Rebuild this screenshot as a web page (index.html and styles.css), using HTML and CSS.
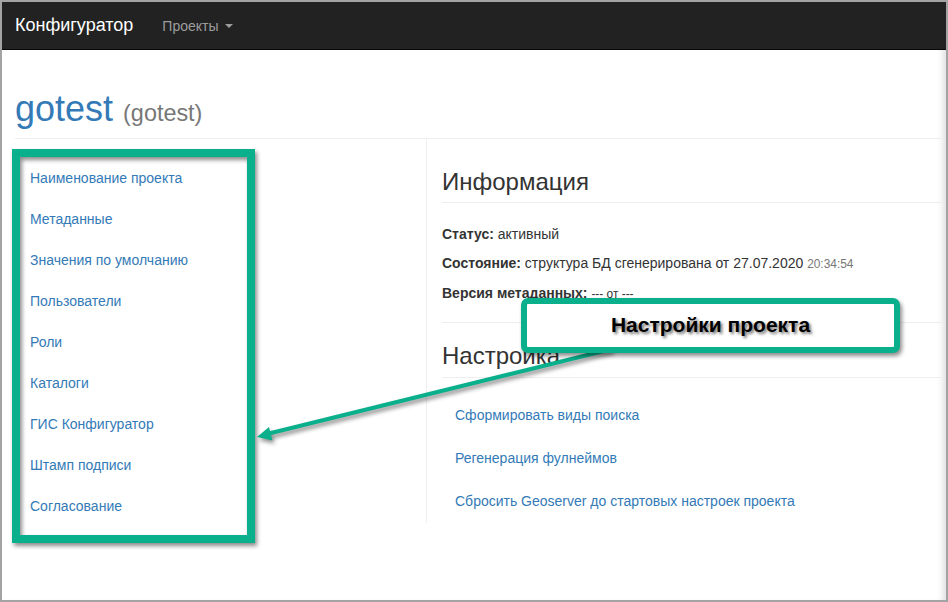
FILE: index.html
```html
<!DOCTYPE html>
<html lang="ru">
<head>
<meta charset="utf-8">
<title>Конфигуратор</title>
<link rel="stylesheet" href="styles.css">
</head>
<body>
<div class="frame">
  <nav class="navbar">
    <span class="brand">Конфигуратор</span>
    <span class="dropdown">Проекты <span class="caret"></span></span>
  </nav>
  <div class="container">
    <div class="page-header">
      <h1>gotest <small>(gotest)</small></h1>
    </div>
    <div class="row">
      <div class="col-left">
        <ul class="nav-stacked">
          <li><a>Наименование проекта</a></li>
          <li><a>Метаданные</a></li>
          <li><a>Значения по умолчанию</a></li>
          <li><a>Пользователи</a></li>
          <li><a>Роли</a></li>
          <li><a>Каталоги</a></li>
          <li><a>ГИС Конфигуратор</a></li>
          <li><a>Штамп подписи</a></li>
          <li><a>Согласование</a></li>
        </ul>
      </div>
      <div class="col-right">
        <h2 class="section-title">Информация</h2>
        <div class="info">
          <p><b>Статус:</b> активный</p>
          <p><b>Состояние:</b> структура БД сгенерирована от 27.07.2020 <small>20:34:54</small></p>
          <p><b>Версия метаданных:</b> <span class="muted">--- от ---</span></p>
        </div>
        <div class="settings">
          <h2 class="section-title">Настройка</h2>
          <ul class="action-list">
            <li><a>Сформировать виды поиска</a></li>
            <li><a>Регенерация фулнеймов</a></li>
            <li><a>Сбросить Geoserver до стартовых настроек проекта</a></li>
          </ul>
        </div>
      </div>
    </div>
  </div>

  <svg class="overlay" width="948" height="602" viewBox="0 0 948 602">
    <rect class="anno" x="16" y="153" width="235" height="386" fill="none" stroke="#0aaf8b" stroke-width="8"/>
    <g class="anno">
      <line x1="612" y1="349" x2="269" y2="433.5" stroke="#0aaf8b" stroke-width="4"/>
      <polygon points="257,437 272.5,440.5 269,427" fill="#0aaf8b"/>
    </g>
  </svg>
  <div class="callout">Настройки проекта</div>
</div>
</body>
</html>
```

FILE: styles.css
```css
* { box-sizing: border-box; }

html, body {
  margin: 0;
  padding: 0;
  background: #ffffff;
}

body {
  font-family: "Liberation Sans", Arial, sans-serif;
  font-size: 14px;
  line-height: 20px;
  color: #333333;
}

.frame {
  position: relative;
  width: 948px;
  height: 602px;
  border: 2px solid #a3a3a3;
  overflow: hidden;
  background: #ffffff;
  box-shadow: inset -7px 0 6px -4px rgba(0, 0, 0, 0.13);
}

/* Navbar */
.navbar {
  height: 48px;
  background: #222222;
  border-bottom: 1px solid #080808;
  display: flex;
  align-items: center;
  padding-left: 13px;
}

.brand {
  color: #ffffff;
  font-size: 18px;
  line-height: 20px;
  margin-top: -1px;
}

.dropdown {
  color: #9d9d9d;
  font-size: 14px;
  margin-left: 29px;
  display: flex;
  align-items: center;
}

.caret {
  display: inline-block;
  width: 0;
  height: 0;
  margin-left: 6px;
  border-top: 4px solid #9d9d9d;
  border-left: 4px solid transparent;
  border-right: 4px solid transparent;
}

/* Content */
.container {
  padding-left: 13px;
}

.page-header {
  margin-top: 39px;
  padding-bottom: 9px;
  border-bottom: 1px solid #eeeeee;
}

.page-header h1 {
  margin: 0;
  height: 40px;
  font-size: 36px;
  line-height: 40px;
  font-weight: normal;
  color: #337ab7;
}

.page-header h1 small {
  font-size: 65%;
  line-height: 0;
  color: #777777;
}

.row {
  display: flex;
  align-items: flex-start;
}

.col-left {
  width: 411px;
  flex: none;
}

.nav-stacked {
  list-style: none;
  margin: 19px 0 0 0;
  padding: 0;
  display: flex;
  flex-direction: column;
  gap: 1px;
}

.nav-stacked a,
.action-list a {
  display: block;
  color: #337ab7;
  text-decoration: none;
}

.nav-stacked a {
  padding: 10px 15px;
}

.col-right {
  flex: 1;
  border-left: 1px solid #eeeeee;
  padding: 29px 0 0 15px;
}

.section-title {
  margin: 0;
  font-size: 24px;
  line-height: 28px;
  font-weight: normal;
  color: #333333;
  padding-bottom: 6px;
  border-bottom: 1px solid #eeeeee;
}

.info {
  margin-top: 21px;
}

.info p {
  margin: 0 0 9px 0;
}

.info small {
  font-size: 85%;
  color: #777777;
}

.muted {
  font-size: 85%;
  color: #333333;
}

.settings {
  margin-top: 18px;
  border-top: 1px solid #eeeeee;
  padding-top: 19px;
}

.settings .section-title {
  padding-bottom: 7px;
}

.action-list {
  list-style: none;
  margin: 16px 0 0 0;
  padding: 0;
}

.action-list a {
  padding: 11px 0 11px 13px;
  line-height: 21px;
}

/* Annotations */
.overlay {
  position: absolute;
  left: -2px;
  top: -2px;
  pointer-events: none;
}

.anno {
  filter: drop-shadow(2px 3px 2px rgba(0, 0, 0, 0.45));
}

.callout {
  position: absolute;
  left: 519px;
  top: 296px;
  width: 379px;
  height: 55px;
  border: 6px solid #0aaf8b;
  border-radius: 7px;
  background: #ffffff;
  box-shadow: 2px 3px 4px rgba(0, 0, 0, 0.45);
  display: flex;
  align-items: center;
  justify-content: center;
  font-size: 21px;
  font-weight: bold;
  color: #000000;
  text-shadow: 2px 2px 3px rgba(0, 0, 0, 0.55);
  padding-bottom: 2px;
}
```
